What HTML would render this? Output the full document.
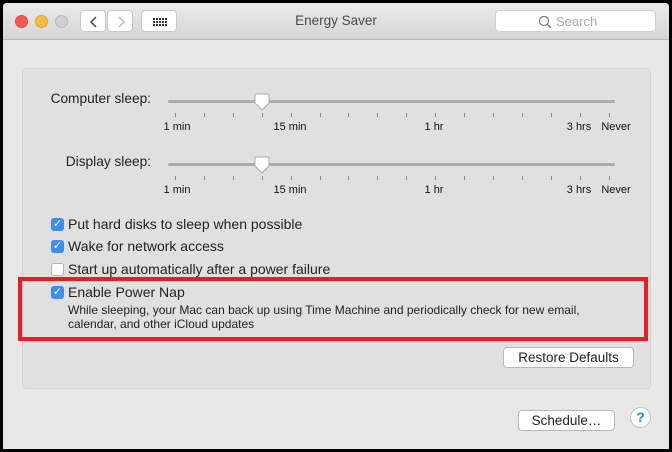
<!DOCTYPE html>
<html><head><style>
*{box-sizing:border-box;margin:0;padding:0}
body{width:672px;height:452px;background:#000;font-family:"Liberation Sans",sans-serif;color:#222;position:relative;overflow:hidden}
.win{position:absolute;left:3px;top:3px;width:666px;height:446px;background:#e8e8e8;border-radius:4px 4px 0 0;overflow:hidden}
.tb{position:absolute;left:0;top:0;width:666px;height:37px;background:linear-gradient(#ebebeb,#d5d5d5);border-bottom:1px solid #b5b5b5}
.a{position:absolute}
.dot{position:absolute;top:12px;width:13px;height:13px;border-radius:50%}
.btn{position:absolute;background:#fff;border:1px solid #c8c8c8;border-radius:4px}
.panel{position:absolute;left:19px;top:65px;width:629px;height:321px;background:#e0e0e0;border:1px solid #d3d3d3;border-radius:4px}
.track{position:absolute;left:165px;width:447px;height:3px;background:#ababab;border-radius:2px}
.tick{position:absolute;width:1px;height:4px;background:#888}
.lbl{position:absolute;font-size:11px;color:#111;white-space:nowrap;transform:translateX(-50%)}
.cb{position:absolute;left:48px;width:13px;height:13px;border-radius:3px;background:#3b8ef0;color:#fff;font-size:11px;line-height:13px;text-align:center}
.cb.off{background:#fff;border:1px solid #b0b0b0}
.ct{position:absolute;left:65px;font-size:14px;white-space:nowrap;color:#222}
.pb{position:absolute;background:#fff;border:1px solid #b8b8b8;border-radius:4px;font-size:13.5px;text-align:center;line-height:19px;color:#222}
</style></head><body>
<div class="win">
<div class="tb">
<div class="dot" style="left:12px;background:#fc5753;border:1px solid #df4744"></div>
<div class="dot" style="left:32px;background:#fdbc40;border:1px solid #de9f34"></div>
<div class="dot" style="left:52px;background:#d0d0d0;border:1px solid #b8b8b8"></div>
<div class="btn" style="left:77px;top:7px;width:26px;height:22px"><svg width="26" height="22"><path d="M15 6 L10 11 L15 16" stroke="#444" stroke-width="1.5" fill="none"/></svg></div>
<div class="btn" style="left:104px;top:7px;width:26px;height:22px"><svg width="26" height="22"><path d="M11 6 L16 11 L11 16" stroke="#bbb" stroke-width="1.5" fill="none"/></svg></div>
<div class="btn" style="left:138px;top:7px;width:36px;height:22px"><svg width="36" height="22"><g fill="#333">
<rect x="11" y="7" width="2" height="2"/><rect x="14" y="7" width="2" height="2"/><rect x="17" y="7" width="2" height="2"/><rect x="20" y="7" width="2" height="2"/><rect x="23" y="7" width="2" height="2"/>
<rect x="11" y="10" width="2" height="2"/><rect x="14" y="10" width="2" height="2"/><rect x="17" y="10" width="2" height="2"/><rect x="20" y="10" width="2" height="2"/><rect x="23" y="10" width="2" height="2"/>
<rect x="11" y="13" width="2" height="2"/><rect x="14" y="13" width="2" height="2"/><rect x="17" y="13" width="2" height="2"/><rect x="20" y="13" width="2" height="2"/><rect x="23" y="13" width="2" height="2"/></g></svg></div>
<div class="a" style="left:0;width:666px;top:10px;text-align:center;font-size:13.5px;color:#4a4a4a">Energy Saver</div>
<div class="btn" style="left:492px;top:7px;width:161px;height:22px;border-color:#d0d0d0"><svg class="a" style="left:42px;top:4px" width="14" height="14"><circle cx="6" cy="6" r="4.5" stroke="#777" stroke-width="1.2" fill="none"/><path d="M9.3 9.3 L13 13" stroke="#777" stroke-width="1.3"/></svg><span class="a" style="left:60px;top:3px;font-size:13px;color:#aaa">Search</span></div>
</div>
<div class="panel"></div>
<div class="a" style="left:0;top:88px;width:148px;text-align:right;font-size:13.7px">Computer sleep:</div>
<div class="track" style="top:97px"></div>
<div class="a" style="left:0;top:151px;width:148px;text-align:right;font-size:13.7px">Display sleep:</div>
<div class="track" style="top:160px"></div>
<div class="cb" style="top:215px">✓</div><div class="ct" style="top:213px">Put hard disks to sleep when possible</div>
<div class="cb" style="top:237px">✓</div><div class="ct" style="top:235px">Wake for network access</div>
<div class="cb off" style="top:260px"></div><div class="ct" style="top:258px">Start up automatically after a power failure</div>
<div class="a" style="left:15px;top:274px;width:630px;height:64px;border:4px solid #ec1c24"></div>
<div class="cb" style="top:283px">✓</div><div class="ct" style="top:281px">Enable Power Nap</div>
<div class="a" style="left:65px;top:300px;font-size:12px;line-height:14px;color:#222;white-space:nowrap">While sleeping, your Mac can back up using Time Machine and periodically check for new email,<br>calendar, and other iCloud updates</div>
<div class="pb" style="left:500px;top:344px;width:131px;height:21px">Restore Defaults</div>
<div class="pb" style="left:515px;top:407px;width:97px;height:21px">Schedule…</div>
<div class="a" style="left:627px;top:404px;width:21px;height:21px;border-radius:50%;background:#fff;border:1px solid #c0c0c0;color:#2f7df0;font-size:14px;font-weight:bold;text-align:center;line-height:19px">?</div>
</div>
<script>
var h='';
[[98,113,127],[161,176,190]].forEach(function(r){
for(var i=0;i<16;i++){var x=175+i*28.9-3;h+='<div class="tick" style="left:'+x.toFixed(1)+'px;top:'+(r[1]-3)+'px"></div>';}
[['1 min',174],['15 min',287],['1 hr',431],['3 hrs',576],['Never',613]].forEach(function(l){h+='<div class="lbl" style="left:'+l[1]+'px;top:'+(r[2]-9)+'px">'+l[0]+'</div>';});
h+='<svg class="a" style="left:249px;top:'+(r[0]-8)+'px" width="20" height="20"><path d="M3 2.5 Q3 1 4.5 1 H15.5 Q17 1 17 2.5 V10 L10 17 L3 10 Z" fill="#fff" stroke="#aaa" stroke-width="1"/></svg>';
});
document.querySelector('.win').insertAdjacentHTML('beforeend',h);
</script>
</body></html>
